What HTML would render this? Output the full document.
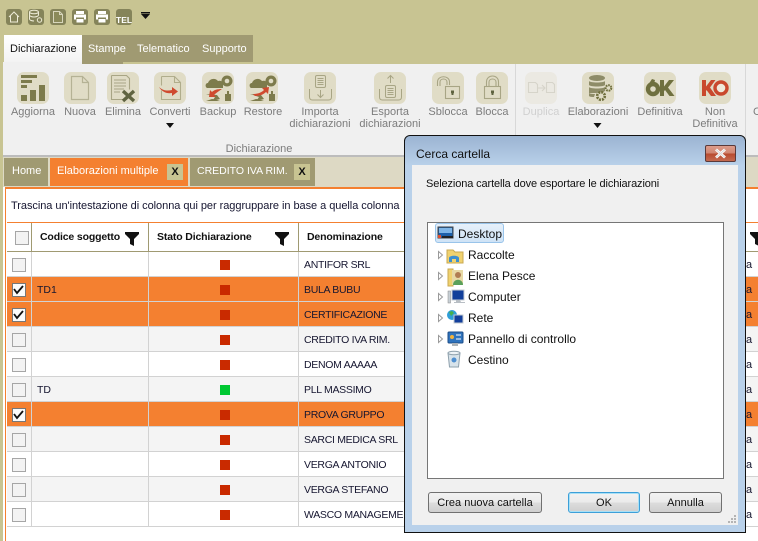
<!DOCTYPE html>
<html><head><meta charset="utf-8">
<style>
html,body{margin:0;padding:0;width:758px;height:541px;overflow:hidden;background:#fff}
body{position:relative;font-family:"Liberation Sans",sans-serif;font-size:11px}
.a{position:absolute}
.t{position:absolute;white-space:nowrap;line-height:14px}
.c{position:absolute;white-space:nowrap;line-height:12px;text-align:center;color:#7c7c7c;font-size:11px}
.row{position:absolute;left:7px;width:400px;height:24px;border-bottom:1px solid #d2d2d2}
.v{position:absolute;width:1px;background:#d2d2d2}
.cb{position:absolute;left:12px;width:12px;height:12px;border:1px solid #a6a6a6;background:#f3f3f3}
.cb.k{background:#fbfbfb;border-color:#777}
.sq{position:absolute;left:220px;width:10px;height:10px;background:#c92a00}
.n{position:absolute;left:304px;white-space:nowrap;color:#161630;line-height:14px;font-size:10.5px;letter-spacing:-.3px}
.btn{position:absolute;box-sizing:border-box;height:21px;top:492px;border:1px solid #707070;border-radius:3px;background:linear-gradient(#f2f2f2 0,#ebebeb 48%,#dcdcdc 52%,#cfcfcf 100%);text-align:center;line-height:20px;font-size:11px;color:#111}
.tree{position:absolute;left:468px;white-space:nowrap;font-size:12px;line-height:14px;color:#111}
.hd{position:absolute;white-space:nowrap;line-height:14px;top:230px;font-weight:bold;color:#111;font-size:10.5px;letter-spacing:-.15px}
svg{position:absolute;overflow:visible}
</style></head>
<body>
<!-- top band -->
<div class="a" style="left:0;top:0;width:758px;height:62px;background:#c8c492"></div>
<div class="a" style="left:0;top:62px;width:3px;height:479px;background:#c8c492"></div>
<div class="a" style="left:3px;top:62px;width:755px;height:93px;background:#f0f0f0"></div>
<div class="a" style="left:82px;top:62px;width:41px;height:2px;background:#a09a72"></div>
<div class="a" style="left:123px;top:62px;width:635px;height:2px;background:#c8c492"></div>

<!-- quick toolbar -->
<svg style="left:0;top:0" width="158" height="30">
 <g fill="#85845a">
  <rect x="6" y="9" width="16" height="16" rx="3"/><rect x="28" y="9" width="16" height="16" rx="3"/><rect x="50" y="9" width="16" height="16" rx="3"/><rect x="72" y="9" width="16" height="16" rx="3"/><rect x="94" y="9" width="16" height="16" rx="3"/><rect x="116" y="9" width="16" height="16" rx="3"/>
 </g>
 <path d="M9 17l5-5 5 5M10.500 16v6h7v-6" fill="none" stroke="#eeecd8" stroke-width="1"/>
 <g fill="none" stroke="#eeecd8" stroke-width="1"><ellipse cx="34" cy="12" rx="4.500" ry="1.800"/><path d="M29.500 12v7c0 1 2 2 4.500 2M38.500 12v3M29.500 15c0 1 2 2 4.500 2s4.500-1 4.500-2"/><circle cx="39.500" cy="20" r="2.200"/></g>
 <path d="M53.500 11.500h6l3 3v8h-9zM59.500 11.500v3h3" fill="#8b8a5a" stroke="#d8d6bc"/>
 <path d="M76 11h8v3h-8zM74 14.500h12v5h-2v-2h-8v2h-2zM76.500 19h7v3.500h-7z" fill="#fff"/>
 <path d="M98 11h8v3h-8zM96 14.500h12v5h-2v-2h-8v2h-2zM98.500 19h7v3.500h-7z" fill="#fff"/>
 <path d="M141 12h9v1.500h-9zM141 14h9l-4.500 5z" fill="#111"/>
</svg>
<div class="t" style="left:116px;top:13px;font-size:8.500px;font-weight:bold;color:#fff;">TEL</div>

<!-- ribbon tabs -->
<div class="a" style="left:4px;top:35px;width:78px;height:27px;background:linear-gradient(#fff,#f3f3f3)"></div>
<div class="a" style="left:82px;top:35px;width:171px;height:27px;background:#a09a72"></div>
<div class="t" style="left:10px;top:42px;color:#111;font-size:11px">Dichiarazione</div>
<div class="t" style="left:88px;top:42px;color:#fff;font-size:11px">Stampe</div>
<div class="t" style="left:137px;top:42px;color:#fff;font-size:11px">Telematico</div>
<div class="t" style="left:202px;top:42px;color:#fff;font-size:11px">Supporto</div>

<!-- ribbon icons -->
<svg style="left:0;top:0" width="758" height="135">
 <g fill="#e0dcc6">
  <rect x="17" y="72" width="32" height="32" rx="7"/><rect x="64" y="72" width="32" height="32" rx="7"/><rect x="107" y="72" width="32" height="32" rx="7"/><rect x="154" y="72" width="32" height="32" rx="7"/><rect x="202" y="72" width="32" height="32" rx="7"/><rect x="246" y="72" width="32" height="32" rx="7"/><rect x="304" y="72" width="32" height="32" rx="7"/><rect x="374" y="72" width="32" height="32" rx="7"/><rect x="432" y="72" width="32" height="32" rx="7"/><rect x="476" y="72" width="32" height="32" rx="7"/><rect x="582" y="72" width="32" height="32" rx="7"/><rect x="644" y="72" width="32" height="32" rx="7"/><rect x="699" y="72" width="32" height="32" rx="7"/>
  <rect x="525" y="72" width="32" height="32" rx="7" fill="#ebe9e2"/>
 </g>
 <!-- aggiorna -->
 <g fill="#7d7b4c"><rect x="21" y="75" width="16" height="3"/><rect x="21" y="80" width="11" height="3"/><rect x="21" y="85" width="6" height="3"/><rect x="21" y="95" width="6" height="6"/><rect x="30" y="90" width="6" height="11"/><rect x="39" y="85" width="6" height="16"/></g>
 <!-- nuova -->
 <path d="M71.500 76.500h11l6 6v17h-17zM82.500 76.500v6h6" fill="none" stroke="#b5b295" stroke-width="1.200"/>
 <!-- elimina -->
 <path d="M111.500 75.500h15l3 3v11M111.500 75.500v24h11" fill="none" stroke="#a8a585" stroke-width="1.100"/>
 <path d="M114 80h12M114 83h12M114 86h12M114 89h10M114 92h6" stroke="#a8a585"/>
 <path d="M123 91l11 10M134 91l-11 10" stroke="#5f6340" stroke-width="3.400"/>
 <!-- converti -->
 <path d="M161.500 76.500h13l6 6v17h-19v-9M174.500 76.500v6h6M161.500 76.500v9" fill="none" stroke="#b0ad8c" stroke-width="1.100"/>
 <path d="M159 87c4 4 9 4 13 3v-3l6 4.500-6 4.500v-3c-5 1-10-1-13-6z" fill="#cf4a2f"/>
 <!-- backup -->
 <g fill="#7d7b4c"><path d="M207 88c-2-1-2-5 1-5 1-4 7-6 10-2 3-1 6 1 5 4v3z"/><circle cx="227" cy="81" r="5.500"/><path d="M206 94l9 3-2 3 7-1-3-4zM206 101h11l3-1-8-1zM225 94h2v-3h2v3h2v7h-6z"/></g>
 <circle cx="227" cy="81" r="2.300" fill="#e0dcc6"/>
 <path d="M222 89c-5 0-8 1-10 3l-2-2-1 7 7 0-2-2c2-2 5-4 8-6z" fill="#cf4a2f"/>
 <!-- restore -->
 <g fill="#7d7b4c"><path d="M251 88c-2-1-2-5 1-5 1-4 7-6 10-2 3-1 6 1 5 4v3z"/><circle cx="271" cy="81" r="5.500"/><path d="M250 94l9 3-2 3 7-1-3-4zM250 101h11l3-1-8-1zM269 94h2v-3h2v3h2v7h-6z"/></g>
 <circle cx="271" cy="81" r="2.300" fill="#e0dcc6"/>
 <path d="M253 94c4 0 8-1 11-4l-2-2 7-1-1 7-2-2c-3 3-7 4-11 4z" fill="#cf4a2f"/>
 <!-- importa -->
 <g fill="none" stroke="#a8a585" stroke-width="1"><rect x="315.500" y="75.500" width="10" height="12" rx="1.500"/><path d="M317.500 78.500h6M317.500 80.500h6M317.500 82.500h6M317.500 84.500h6"/><path d="M309.500 89v8c0 2 1 3 3 3h16c2 0 3-1 3-3v-8M320.500 90v7M317.500 94.500l3 3 3-3"/></g>
 <!-- esporta -->
 <g fill="none" stroke="#a8a585" stroke-width="1"><rect x="385.500" y="85.500" width="10" height="12" rx="1.500"/><path d="M387.500 88.500h6M387.500 90.500h6M387.500 92.500h6M387.500 94.500h6"/><path d="M379.500 89v8c0 2 1 3 3 3h16c2 0 3-1 3-3v-8M390.500 83v-7M387.500 78.500l3-3 3 3"/></g>
 <!-- sblocca -->
 <g fill="none" stroke="#a8a585" stroke-width="1.100"><rect x="445.500" y="86.500" width="14" height="12"/><path d="M437.500 86v-4c0-7 12-7 12 0v3M440 86v-4c0-4 7-4 7 0v3"/></g>
 <path d="M451 90.500h3v2.500l-.5 .5v1.500h-2v-1.500l-.5-.5z" fill="#5f6340"/>
 <!-- blocca -->
 <g fill="none" stroke="#a8a585" stroke-width="1.100"><rect x="484.500" y="86.500" width="16" height="12"/><path d="M486.500 86v-4c0-8 12-8 12 0v4M489 86v-4c0-4 7-4 7 0v4"/></g>
 <path d="M491 90.500h3v2.500l-.5 .5v1.500h-2v-1.500l-.5-.5z" fill="#5f6340"/>
 <!-- duplica -->
 <g fill="none" stroke="#d6d4ca" stroke-width="1.100"><path d="M528.500 82.500h7l2 2v8h-9z"/><path d="M546.500 82.500h6l2 2v8h-8z"/><path d="M538 88h7M542 85l3 3-3 3"/></g>
 <!-- elaborazioni -->
 <g fill="#8e8c68"><ellipse cx="597" cy="78" rx="8" ry="3"/><path d="M589 81c1 2 15 2 16 0v4c-1 2-15 2-16 0zM589 87c1 2 15 2 16 0v4c-1 1-9 2-9 2h-7zM589 93c2 1 4 1 6 1l-1 3c-2 0-4 0-5-1z"/></g>
 <g fill="none" stroke="#6f6f3d"><circle cx="601" cy="96" r="3.800" stroke-width="2.600" stroke-dasharray="2 1"/><circle cx="608.500" cy="88" r="2.800" stroke-width="2" stroke-dasharray="1.700 .8"/></g>
 <!-- definitiva -->
 <circle cx="653" cy="89" r="5" fill="none" stroke="#6f703f" stroke-width="4.400"/>
 <path d="M648 85l4-6 3 1-1 4z" fill="#6f703f"/>
 <path d="M660 80h4v6.500l5-6.500h5l-6 7.500 6.500 8.500h-5l-4.500-6-1 1.200v4.800h-4z" fill="#6f703f"/>
 <!-- KO -->
 <path d="M702 80h4v6.500l5-6.500h4.500l-5.500 7.500 6 8.500h-5l-4.500-6-.5 1v5h-4z" fill="#c9492d"/>
 <circle cx="721" cy="88" r="6" fill="#efeadb" stroke="#c9492d" stroke-width="3.400"/>
 <!-- arrows -->
 <path d="M166 123h8l-4 5z M593.500 123h8l-4 5z" fill="#111"/>
</svg>

<!-- ribbon labels -->
<div class="c" style="left:3px;top:106px;width:60px">Aggiorna</div>
<div class="c" style="left:50px;top:106px;width:60px">Nuova</div>
<div class="c" style="left:93px;top:106px;width:60px">Elimina</div>
<div class="c" style="left:140px;top:106px;width:60px">Converti</div>
<div class="c" style="left:188px;top:106px;width:60px">Backup</div>
<div class="c" style="left:233px;top:106px;width:60px">Restore</div>
<div class="c" style="left:285px;top:106px;width:70px">Importa<br>dichiarazioni</div>
<div class="c" style="left:355px;top:106px;width:70px">Esporta<br>dichiarazioni</div>
<div class="c" style="left:418px;top:106px;width:60px">Sblocca</div>
<div class="c" style="left:462px;top:106px;width:60px">Blocca</div>
<div class="c" style="left:511px;top:106px;width:60px;color:#d0d0d0">Duplica</div>
<div class="c" style="left:563px;top:106px;width:70px">Elaborazioni</div>
<div class="c" style="left:630px;top:106px;width:60px">Definitiva</div>
<div class="c" style="left:685px;top:106px;width:60px">Non<br>Definitiva</div>
<div class="t" style="left:753px;top:105px;color:#7c7c7c">C</div>
<div class="c" style="left:219px;top:143px;width:80px">Dichiarazione</div>
<div class="a" style="left:515px;top:64px;width:1px;height:91px;background:#d8d8d8"></div>
<div class="a" style="left:745px;top:64px;width:1px;height:91px;background:#d8d8d8"></div>

<!-- doc tabs -->
<div class="a" style="left:3px;top:155px;width:755px;height:32px;background:#ddd9c4"></div>
<div class="a" style="left:3px;top:155px;width:755px;height:2px;background:#bcbcbc"></div>
<div class="a" style="left:4px;top:158px;width:44px;height:28px;background:#a09a72"></div>
<div class="a" style="left:50px;top:158px;width:138px;height:28px;background:#f48030"></div>
<div class="a" style="left:190px;top:158px;width:125px;height:28px;background:#a09a72"></div>
<div class="t" style="left:12px;top:164px;color:#fff;font-size:11px">Home</div>
<div class="t" style="left:57px;top:164px;color:#fff;font-size:11px">Elaborazioni multiple</div>
<div class="t" style="left:197px;top:164px;color:#fff;font-size:10.5px">CREDITO IVA RIM.</div>
<div class="a" style="left:167px;top:164px;width:16px;height:16px;background:#c8c492;text-align:center;line-height:17px;font-size:11px;font-weight:bold;color:#111">X</div>
<div class="a" style="left:294px;top:164px;width:16px;height:16px;background:#c8c492;text-align:center;line-height:17px;font-size:11px;font-weight:bold;color:#111">X</div>

<!-- grid -->
<div class="a" style="left:5px;top:187px;width:753px;height:2px;background:#f48030"></div>
<div class="a" style="left:5px;top:187px;width:1px;height:354px;background:#f48030"></div>
<div class="t" style="left:11px;top:199px;color:#151530;font-size:11px;letter-spacing:-.05px">Trascina un'intestazione di colonna qui per raggruppare in base a quella colonna</div>
<div class="a" style="left:7px;top:222px;width:751px;height:1px;background:#f48030"></div>
<div class="a" style="left:7px;top:251px;width:751px;height:1px;background:#a09a72"></div>
<div class="a" style="left:31px;top:223px;width:1px;height:28px;background:#a09a72"></div>
<div class="a" style="left:148px;top:223px;width:1px;height:28px;background:#a09a72"></div>
<div class="a" style="left:298px;top:223px;width:1px;height:28px;background:#a09a72"></div>
<div class="cb" style="left:15px;top:231px;background:#f3f3f3"></div>
<div class="hd" style="left:40px">Codice soggetto</div>
<div class="hd" style="left:157px">Stato Dichiarazione</div>
<div class="hd" style="left:307px">Denominazione</div>
<svg style="left:0;top:0" width="758" height="250">
 <path d="M125 232h14v2l-5 5v7l-4-2v-5l-5-5z" fill="#111"/>
 <path d="M275 232h14v2l-5 5v7l-4-2v-5l-5-5z" fill="#111"/>
 <path d="M750 232h14v2l-5 5v7l-4-2v-5l-5-5z" fill="#111"/>
</svg>

<!-- rows -->
<div class="row" style="top:252px;background:#fff"></div>
<div class="row" style="top:277px;background:#f48030"></div>
<div class="row" style="top:302px;background:#f48030"></div>
<div class="row" style="top:327px;background:#f4f4f4"></div>
<div class="row" style="top:352px;background:#fff"></div>
<div class="row" style="top:377px;background:#f4f4f4"></div>
<div class="row" style="top:402px;background:#f48030"></div>
<div class="row" style="top:427px;background:#f4f4f4"></div>
<div class="row" style="top:452px;background:#fff"></div>
<div class="row" style="top:477px;background:#f4f4f4"></div>
<div class="row" style="top:502px;background:#fff"></div>

<!-- right edge rows -->
<div class="a" style="left:746px;top:277px;width:12px;height:24px;background:#f48030"></div>
<div class="a" style="left:746px;top:302px;width:12px;height:24px;background:#f48030"></div>
<div class="a" style="left:746px;top:327px;width:12px;height:24px;background:#f4f4f4"></div>
<div class="a" style="left:746px;top:377px;width:12px;height:24px;background:#f4f4f4"></div>
<div class="a" style="left:746px;top:402px;width:12px;height:24px;background:#f48030"></div>
<div class="a" style="left:746px;top:427px;width:12px;height:24px;background:#f4f4f4"></div>
<div class="a" style="left:746px;top:477px;width:12px;height:24px;background:#f4f4f4"></div>
<div class="a" style="left:746px;top:276px;width:12px;height:1px;background:#d2d2d2"></div>
<div class="a" style="left:746px;top:301px;width:12px;height:1px;background:#d2d2d2"></div>
<div class="a" style="left:746px;top:326px;width:12px;height:1px;background:#d2d2d2"></div>
<div class="a" style="left:746px;top:351px;width:12px;height:1px;background:#d2d2d2"></div>
<div class="a" style="left:746px;top:376px;width:12px;height:1px;background:#d2d2d2"></div>
<div class="a" style="left:746px;top:401px;width:12px;height:1px;background:#d2d2d2"></div>
<div class="a" style="left:746px;top:426px;width:12px;height:1px;background:#d2d2d2"></div>
<div class="a" style="left:746px;top:451px;width:12px;height:1px;background:#d2d2d2"></div>
<div class="a" style="left:746px;top:476px;width:12px;height:1px;background:#d2d2d2"></div>
<div class="a" style="left:746px;top:501px;width:12px;height:1px;background:#d2d2d2"></div>
<div class="a" style="left:746px;top:526px;width:12px;height:1px;background:#d2d2d2"></div>
<div class="t" style="left:746px;top:258px;color:#161630">a</div>
<div class="t" style="left:746px;top:283px;color:#161630">a</div>
<div class="t" style="left:746px;top:308px;color:#161630">a</div>
<div class="t" style="left:746px;top:333px;color:#161630">a</div>
<div class="t" style="left:746px;top:358px;color:#161630">a</div>
<div class="t" style="left:746px;top:383px;color:#161630">a</div>
<div class="t" style="left:746px;top:408px;color:#161630">a</div>
<div class="t" style="left:746px;top:433px;color:#161630">a</div>
<div class="t" style="left:746px;top:458px;color:#161630">a</div>
<div class="t" style="left:746px;top:483px;color:#161630">a</div>
<div class="t" style="left:746px;top:508px;color:#161630">a</div>

<div class="v" style="left:31px;top:252px;height:275px"></div>
<div class="v" style="left:148px;top:252px;height:275px"></div>
<div class="v" style="left:298px;top:252px;height:275px"></div>

<div class="cb" style="top:258px"></div>
<div class="cb k" style="top:283px"></div>
<div class="cb k" style="top:308px"></div>
<div class="cb" style="top:333px"></div>
<div class="cb" style="top:358px"></div>
<div class="cb" style="top:383px"></div>
<div class="cb k" style="top:408px"></div>
<div class="cb" style="top:433px"></div>
<div class="cb" style="top:458px"></div>
<div class="cb" style="top:483px"></div>
<div class="cb" style="top:508px"></div>
<svg style="left:0;top:0" width="40" height="430">
 <path d="M14 289l3 4 6-7M14 314l3 4 6-7M14 414l3 4 6-7" fill="none" stroke="#111" stroke-width="1.800"/>
</svg>

<div class="sq" style="top:260px"></div>
<div class="sq" style="top:285px"></div>
<div class="sq" style="top:310px"></div>
<div class="sq" style="top:335px"></div>
<div class="sq" style="top:360px"></div>
<div class="sq" style="top:385px;background:#00c832"></div>
<div class="sq" style="top:410px"></div>
<div class="sq" style="top:435px"></div>
<div class="sq" style="top:460px"></div>
<div class="sq" style="top:485px"></div>
<div class="sq" style="top:510px"></div>

<div class="t" style="left:37px;top:283px;color:#161630;font-size:10.5px">TD1</div>
<div class="t" style="left:37px;top:383px;color:#161630;font-size:10.5px">TD</div>

<div class="n" style="top:258px">ANTIFOR SRL</div>
<div class="n" style="top:283px">BULA BUBU</div>
<div class="n" style="top:308px">CERTIFICAZIONE</div>
<div class="n" style="top:333px">CREDITO IVA RIM.</div>
<div class="n" style="top:358px">DENOM AAAAA</div>
<div class="n" style="top:383px">PLL MASSIMO</div>
<div class="n" style="top:408px">PROVA GRUPPO</div>
<div class="n" style="top:433px">SARCI MEDICA SRL</div>
<div class="n" style="top:458px">VERGA ANTONIO</div>
<div class="n" style="top:483px">VERGA STEFANO</div>
<div class="n" style="top:508px;width:101px;overflow:hidden">WASCO MANAGEMENT</div>

<!-- dialog -->
<div class="a" style="left:404px;top:135px;width:342px;height:398px;box-sizing:border-box;border:1px solid #111;border-radius:6px 6px 0 0;background:linear-gradient(#9bb4d2 0,#b9d1ea 30px,#b9d1ea 100%)"></div>
<div class="a" style="left:412px;top:165px;width:326px;height:360px;background:#f0f0f0"></div>
<div class="t" style="left:416px;top:147px;font-size:12px;color:#111">Cerca cartella</div>
<div class="a" style="left:705px;top:145px;width:31px;height:17px;box-sizing:border-box;border:1px solid #5a3a3a;border-radius:2px;background:linear-gradient(#dd9c8c 0,#d08570 48%,#b84a2e 52%,#c46a50 100%)"></div>
<svg style="left:705px;top:145px" width="31" height="17"><path d="M11 4.500l9 8M20 4.500l-9 8" stroke="#fff" stroke-width="2.800"/><path d="M11 4.500l9 8M20 4.500l-9 8" stroke="#d8d8d8" stroke-width="1"/></svg>
<div class="t" style="left:426px;top:177px;font-size:11px;color:#111;letter-spacing:-.12px">Seleziona cartella dove esportare le dichiarazioni</div>

<div class="a" style="left:427px;top:222px;width:297px;height:257px;box-sizing:border-box;border:1px solid #767676;background:#fff"></div>
<div class="a" style="left:435px;top:223px;width:69px;height:20px;box-sizing:border-box;border:1px solid #99c4ea;border-radius:3px;background:linear-gradient(#e6f0fa,#cfe3f6)"></div>
<svg style="left:0;top:0" width="520" height="380">
 <!-- desktop -->
 <rect x="438" y="227" width="15" height="11" fill="#1d5fa8" stroke="#444"/><rect x="439" y="228" width="13" height="5" fill="#7fb5e6"/><rect x="442" y="236" width="11" height="2" fill="#222"/><rect x="438" y="235" width="3" height="3" fill="#e05030"/>
 <!-- arrows -->
 <g fill="#fff" stroke="#9a9a9a"><path d="M438.500 251.500v7l4-3.500z"/><path d="M438.500 272.500v7l4-3.500z"/><path d="M438.500 293.500v7l4-3.500z"/><path d="M438.500 314.500v7l4-3.500z"/><path d="M438.500 335.500v7l4-3.500z"/></g>
 <!-- raccolte -->
 <path d="M447 250h6l2 2h8v11h-16z" fill="#f0d26f" stroke="#c9a850"/>
 <path d="M449 262v-4c0-3 10-3 10 0v4h-3v-3h-4v3z" fill="#3d8fd0"/>
 <!-- elena -->
 <path d="M448 269h5v17h-5z" fill="#f0d26f" stroke="#c9a850"/>
 <rect x="452" y="270" width="11" height="15" fill="#e7d9a5"/>
 <circle cx="458" cy="275" r="3" fill="#b07d52"/><path d="M453 285c0-7 10-7 10 0z" fill="#5aa05a"/>
 <!-- computer -->
 <rect x="448" y="291" width="2.500" height="12" fill="#c8d0d6" stroke="#888" stroke-width=".5"/>
 <rect x="452" y="290" width="12" height="10" fill="#123f9b" stroke="#c5cbd0"/>
 <path d="M456 300h4l1 2h4v1h-11v-1h2z" fill="#b8bec4"/>
 <!-- rete -->
 <circle cx="452" cy="315" r="5" fill="#2f9ed8"/><path d="M449 312l3-1 2 2-3 3z" fill="#46b04a"/>
 <rect x="454" y="315" width="9" height="8" fill="#133f9c" stroke="#c5cbd0"/>
 <!-- pannello -->
 <rect x="448" y="332" width="15" height="11" rx="1" fill="#2f73bd" stroke="#1c4c88"/>
 <circle cx="452" cy="337" r="2" fill="#f2b33c"/><path d="M456 335h5M456 339h5" stroke="#fff"/>
 <path d="M452 343h6v3h-6z" fill="#aeb4b8"/>
 <!-- cestino -->
 <path d="M448 353h12l-1.500 14h-9z" fill="#d8e3ea" stroke="#8ea0ac"/>
 <ellipse cx="454" cy="353" rx="6" ry="1.800" fill="#eef3f6" stroke="#8ea0ac"/>
 <circle cx="454" cy="360" r="2.500" fill="#4f8fd0"/>
</svg>
<div class="tree" style="left:458px;top:227px">Desktop</div>
<div class="tree" style="top:248px">Raccolte</div>
<div class="tree" style="top:269px">Elena Pesce</div>
<div class="tree" style="top:290px">Computer</div>
<div class="tree" style="top:311px">Rete</div>
<div class="tree" style="top:332px">Pannello di controllo</div>
<div class="tree" style="top:353px">Cestino</div>

<div class="btn" style="left:428px;width:114px">Crea nuova cartella</div>
<div class="btn" style="left:568px;width:72px;border:1px solid #3c9fd8;box-shadow:inset 0 0 0 1px #a8e0f6">OK</div>
<div class="btn" style="left:649px;width:73px">Annulla</div>
<svg style="left:727px;top:514px" width="10" height="10"><g fill="#b4b4b4"><rect x="7" y="1" width="2" height="2"/><rect x="4" y="4" width="2" height="2"/><rect x="7" y="4" width="2" height="2"/><rect x="1" y="7" width="2" height="2"/><rect x="4" y="7" width="2" height="2"/><rect x="7" y="7" width="2" height="2"/></g></svg>
</body></html>
